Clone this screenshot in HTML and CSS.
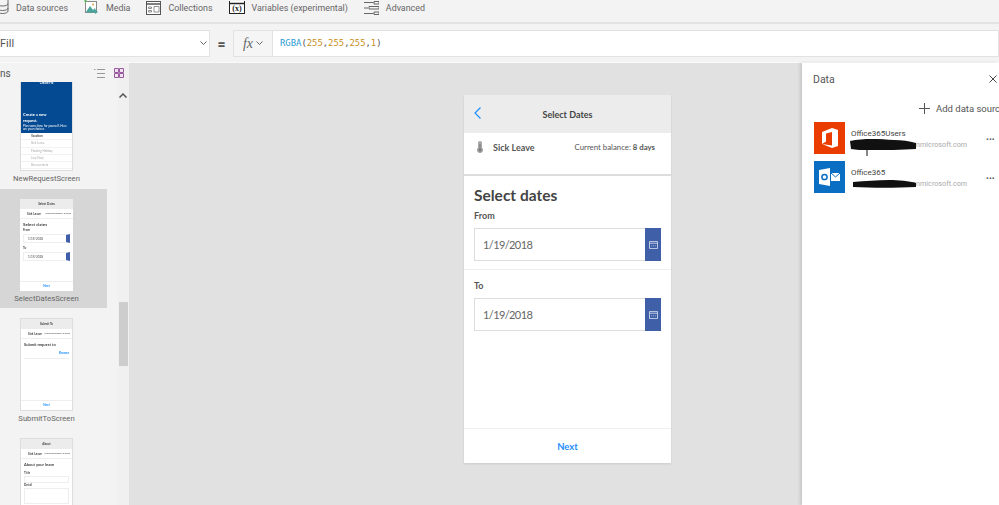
FILE: index.html
```html
<!DOCTYPE html>
<html lang="en">
<head>
    <meta charset="UTF-8">
    <meta name="viewport" content="width=device-width, initial-scale=1.0">
    <title>Select Dates</title>
    <link rel="stylesheet" href="styles.css">
</head>
<body>

    <div class="toolbar">
        <div class="tool tool-data">
            <svg width="12" height="16" viewBox="0 0 12 16"><g fill="none" stroke="#666"><path d="M0 0v11c0 1.500 2.500 2.500 5.500 2.500S11 12.500 11 11V0"/><path d="M0 3.500c0 1.500 2.500 2.500 5.500 2.500S11 5 11 3.500M0 8c0 1.500 2.500 2.500 5.500 2.500S11 9.500 11 8"/></g></svg>
            <span>Data sources</span>
        </div>
        <div class="tool">
            <svg width="15" height="16" viewBox="0 0 15 16"><rect x="1.500" y="1.500" width="11" height="11" fill="#fff" stroke="#888"/><path d="M2 12l4-6 3 4 2-2 1.500 4.500H2z" fill="#4aa59c"/><path d="M0 1h3M1.500 0v3" stroke="#5cb85c"/><circle cx="9" cy="4.500" r="1" fill="#d9a441"/><path d="M11 10l3 2-3 2z" fill="#4aa59c"/></svg>
            <span>Media</span>
        </div>
        <div class="tool">
            <svg width="15" height="14" viewBox="0 0 15 14"><rect x=".5" y=".5" width="14" height="13" fill="#fff" stroke="#555"/><path d="M.5 3h14" stroke="#555" stroke-width="1.500"/><path d="M2.500 6h3v1.500h-3zM2.500 9.500h3V11h-3zM8 5.500h5V11H8z" fill="#fff" stroke="#777" stroke-width=".8"/></svg>
            <span>Collections</span>
        </div>
        <div class="tool">
            <svg width="16" height="14" viewBox="0 0 16 14"><rect x=".5" y="-1" width="15" height="13.500" fill="#fff" stroke="#222"/><path d="M.5 2.500h15" stroke="#222" stroke-width="1.500"/><text x="8" y="10" font-size="8" font-weight="bold" text-anchor="middle" font-family="Liberation Serif" fill="#222">(x)</text></svg>
            <span>Variables (experimental)</span>
        </div>
        <div class="tool">
            <svg width="15" height="14" viewBox="0 0 15 14"><path d="M0 1.500h9.500M0 7h4M0 12.500h9.500M10 .5h5v2.500h-5zM5 5.500h10V8H5zM10 11h5v2.500h-5z" fill="none" stroke="#666"/></svg>
            <span>Advanced</span>
        </div>
    </div>

    <div class="formula-bar">
        <div class="property">
            <span>Fill</span>
            <svg width="7" height="5" viewBox="0 0 7 5"><path d="M.5.500l3 3 3-3" fill="none" stroke="#666"/></svg>
        </div>
        <div class="equals">=</div>
        <div class="fx">
            <i>fx</i>
            <svg width="7" height="5" viewBox="0 0 7 5"><path d="M.5.500l3 3 3-3" fill="none" stroke="#666"/></svg>
        </div>
        <div class="formula">
            <span class="fn">RGBA</span><span class="paren">(</span><span class="num">255</span><span class="paren">,</span><span class="num">255</span><span class="paren">,</span><span class="num">255</span><span class="paren">,</span><span class="num">1</span><span class="paren">)</span>
        </div>
    </div>

    <div class="workspace">

        <div class="sidebar">
            <div class="sidebar-list">
                <div class="sidebar-head">
                    <span class="sidebar-title">ns</span>
                    <svg class="view-list" width="11" height="9" viewBox="0 0 11 9"><path d="M3 .500h8M3 4.500h8M3 8.500h8M0 .500h1.500" stroke="#999" fill="none"/></svg>
                    <svg class="view-grid" width="10" height="10" viewBox="0 0 10 10"><path d="M.5.500h4v4h-4zM5.500.500h4v4h-4zM.5 5.500h4v4h-4zM5.500 5.500h4v4h-4z" fill="#efe3f0" stroke="#9a5aa0"/></svg>
                </div>

                <div class="screen-item screen-first">
                    <div class="thumb thumb-short">
                        <div class="mini-hero">
                            <div class="mini-hero-title">Create Fix</div>
                            <div class="mini-hero-big">Create a new<br>request.</div>
                            <div class="mini-hero-sub">Plan some time for yourself. Here are your choices</div>
                        </div>
                        <div class="mini-line"><b>Vacation</b></div>
                        <div class="mini-line">Sick Leave</div>
                        <div class="mini-line">Floating Holiday</div>
                        <div class="mini-line">Jury Duty</div>
                        <div class="mini-line">Bereavement</div>
                    </div>
                    <div class="screen-name">NewRequestScreen</div>
                </div>

                <div class="screen-item screen-selected">
                    <div class="thumb">
                        <div class="mini-head">Select Dates</div>
                        <div class="mini-info"><b>Sick Leave</b><span>Current balance: 8 days</span></div>
                        <div class="mini-body">
                            <div class="mini-h1">Select dates</div>
                            <div class="mini-label">From</div>
                            <div class="mini-input">1/19/2018</div>
                            <div class="mini-label mini-to">To</div>
                            <div class="mini-input">1/19/2018</div>
                        </div>
                        <div class="mini-next">Next</div>
                    </div>
                    <div class="screen-name">SelectDatesScreen</div>
                </div>

                <div class="screen-item">
                    <div class="thumb thumb-border">
                        <div class="mini-head">Submit To</div>
                        <div class="mini-info"><b>Sick Leave</b><span>Current balance: 8 days</span></div>
                        <div class="mini-body">
                            <div class="mini-h2">Submit request to</div>
                            <div class="mini-link">Browse</div>
                        </div>
                        <div class="mini-next">Next</div>
                    </div>
                    <div class="screen-name">SubmitToScreen</div>
                </div>

                <div class="screen-item">
                    <div class="thumb thumb-border">
                        <div class="mini-head">About</div>
                        <div class="mini-info"><b>Sick Leave</b><span>Current balance: 8 days</span></div>
                        <div class="mini-body">
                            <div class="mini-h2">About your leave</div>
                            <div class="mini-label">Title</div>
                            <div class="mini-field"></div>
                            <div class="mini-label">Detail</div>
                            <div class="mini-field mini-field-tall"></div>
                        </div>
                    </div>
                </div>
            </div>

            <div class="scroller">
                <svg class="scroll-up" width="8" height="5" viewBox="0 0 8 5"><path d="M.5 4.500L4 1l3.500 3.500" fill="none" stroke="#555" stroke-width="1.500"/></svg>
                <div class="scroll-thumb"></div>
            </div>
        </div>

        <div class="canvas">
            <div class="phone">
                <div class="phone-head">
                    <svg class="back" width="7" height="12" viewBox="0 0 7 12"><path d="M6.500.500L1 6l5.500 5.500" fill="none" stroke="#1f8fff" stroke-width="1.200"/></svg>
                    <span>Select Dates</span>
                </div>
                <div class="leave-row">
                    <svg width="6" height="12" viewBox="0 0 6 12"><path d="M1 1.500a2 1.500 0 0 1 4 0v5.300a3 3 0 1 1-4 0z" fill="#a8a8a8"/><path d="M2.500 3h1v6h-1z" fill="#777"/><circle cx="3" cy="9" r="1.500" fill="#777"/></svg>
                    <b>Sick Leave</b>
                    <span class="balance">Current balance: <b>8 days</b></span>
                </div>
                <div class="section section-from">
                    <div class="page-title">Select dates</div>
                    <div class="field-label">From</div>
                    <div class="date-input">
                        <span>1/19/2018</span>
                        <div class="date-btn">
                            <svg width="9" height="8" viewBox="0 0 10 9"><path d="M.5.500h9v8h-9zM.5 2.500h9" fill="none" stroke="#cfd6ea"/><path d="M2.500 5h1v1h-1zM4.500 5h1v1h-1zM6.500 5h1v1h-1z" fill="#cfd6ea"/></svg>
                        </div>
                    </div>
                </div>
                <div class="section section-to">
                    <div class="field-label">To</div>
                    <div class="date-input">
                        <span>1/19/2018</span>
                        <div class="date-btn">
                            <svg width="9" height="8" viewBox="0 0 10 9"><path d="M.5.500h9v8h-9zM.5 2.500h9" fill="none" stroke="#cfd6ea"/><path d="M2.500 5h1v1h-1zM4.500 5h1v1h-1zM6.500 5h1v1h-1z" fill="#cfd6ea"/></svg>
                        </div>
                    </div>
                </div>
                <div class="phone-foot">Next</div>
            </div>
        </div>

        <div class="data-panel">
            <div class="panel-head">
                <span>Data</span>
                <svg width="8" height="8" viewBox="0 0 8 8"><path d="M.5.500l7 7M7.500.500l-7 7" stroke="#444" fill="none"/></svg>
            </div>
            <div class="add-source">
                <svg width="11" height="11" viewBox="0 0 11 11"><path d="M5.500 0v11M0 5.500h11" stroke="#555" fill="none"/></svg>
                <span>Add data source</span>
            </div>
            <div class="source">
                <div class="source-icon icon-office">
                    <svg width="16" height="20" viewBox="0 0 16 20"><path d="M0 4L10 0l6 2v16l-6 2L0 16l10 1.500V4L4 5.500v8L0 16z" fill="#fff"/></svg>
                </div>
                <div class="source-text">
                    <div class="source-name">Office365Users</div>
                    <div class="source-sub">onmicrosoft.com</div>
                </div>
                <div class="more">...</div>
                <svg class="scribble scribble-one" width="66" height="17" viewBox="0 0 66 17"><path d="M0 2c14-3 30-2 44-1 8 0 15 1 22 3v6c-14 1-30 1-48 1-6 0-12 0-17-1z" fill="#111"/><path d="M17 10v7" stroke="#111" fill="none"/></svg>
            </div>
            <div class="source">
                <div class="source-icon icon-outlook">
                    <svg width="22" height="18" viewBox="0 0 22 18"><path d="M0 2l11-2v18L0 16z" fill="#fff"/><circle cx="5.500" cy="9" r="2.600" fill="none" stroke="#0a6fc2" stroke-width="1.500"/><path d="M12 5h9v8h-9z" fill="#fff"/><path d="M12 5l4.500 4L21 5" fill="none" stroke="#0a6fc2"/></svg>
                </div>
                <div class="source-text">
                    <div class="source-name">Office365</div>
                    <div class="source-sub">onmicrosoft.com</div>
                </div>
                <div class="more">...</div>
                <svg class="scribble scribble-two" width="63" height="8" viewBox="0 0 63 8"><path d="M0 2c12-1 24-2 36-2 10 0 20 1 27 3v4c-20 1-44 1-63 0z" fill="#111"/></svg>
            </div>
        </div>

    </div>

</body>
</html>
```

FILE: styles.css
```css
* {
    box-sizing: border-box;
}
html, body {
    height: 100%;
}
body {
    margin: 0;
    width: 999px;
    height: 505px;
    overflow: hidden;
    display: flex;
    flex-direction: column;
    font-family: Roboto, Arial, sans-serif;
    background-color: #f3f3f3;
    color: #555;
}

/* top ribbon */
.toolbar {
    height: 24px;
    flex: none;
    display: flex;
    gap: 16px;
    border-bottom: 2px solid #e4e4e4;
    font-size: 8.900px;
    color: #666;
}
.tool {
    display: flex;
    align-items: center;
    height: 16px;
    gap: 7px;
    white-space: nowrap;
}
.tool-data {
    margin-left: -3px;
    gap: 7px;
}

/* formula bar */
.formula-bar {
    height: 38px;
    flex: none;
    display: flex;
    align-items: center;
    padding-top: 1px;
}
.property {
    width: 210px;
    height: 27px;
    background-color: #fff;
    border: 1px solid #e2e2e2;
    border-left: none;
    display: flex;
    align-items: center;
    justify-content: space-between;
    padding-right: 2px;
    font-size: 11px;
}
.equals {
    width: 23px;
    text-align: center;
    font-size: 14px;
    font-weight: bold;
    color: #555;
}
.fx {
    width: 40px;
    height: 27px;
    border: 1px solid #e2e2e2;
    background-color: #f5f5f5;
    display: flex;
    align-items: center;
    justify-content: center;
    gap: 3px;
    font-family: "Liberation Serif", serif;
    font-size: 14px;
    color: #666;
}
.formula {
    flex: 1;
    height: 27px;
    background-color: #fff;
    border: 1px solid #e2e2e2;
    border-left: none;
    padding-left: 7px;
    line-height: 25px;
    font-family: "DejaVu Sans Mono", monospace;
    font-size: 8.900px;
}
.fn {
    color: #2b9bd3;
}
.paren {
    color: #555;
}
.num {
    color: #c98f22;
}

.workspace {
    flex: 1;
    display: flex;
    min-height: 0;
    border-top: 1px solid #fafafa;
}

/* screens list */
.sidebar {
    width: 130px;
    flex: none;
    display: flex;
    border-right: 1px solid #e0e0e0;
    overflow: hidden;
}
.sidebar-list {
    width: 118px;
    flex: none;
}
.sidebar-head {
    width: 125px;
    height: 18px;
    display: flex;
    align-items: center;
    padding: 2px 1px 0 0;
    font-size: 10px;
    margin-bottom: 1px;
    position: relative;
    z-index: 1;
}
.sidebar-title {
    flex: 1;
}
.view-list {
    margin-right: 9px;
}
.screen-item {
    width: 107px;
    height: 120px;
    padding: 10px 14px 0 0;
    display: flex;
    flex-direction: column;
    align-items: center;
}
.screen-first {
    height: 107px;
    padding-top: 0;
}
.screen-selected {
    height: 119px;
    background-color: #d6d6d6;
}
.screen-name {
    margin-top: 2px;
    font-size: 7.700px;
    line-height: 12px;
    color: #666;
    white-space: nowrap;
}

/* mini previews, a quarter of the real screen */
.thumb {
    width: 53px;
    height: 92px;
    flex: none;
    background-color: #fff;
    display: flex;
    flex-direction: column;
    font-family: Lato, sans-serif;
    font-size: 3px;
    color: #444;
    overflow: hidden;
    filter: blur(0.3px);
}
.thumb-short {
    height: 89px;
    border: 1px solid #ddd;
    border-top: none;
}
.thumb-border {
    height: 93px;
    border: 1px solid #ddd;
}
.mini-hero {
    height: 51px;
    flex: none;
    background-color: #044a92;
    color: #fff;
}
.mini-hero-title {
    text-align: center;
    font-weight: bold;
    line-height: 3px;
}
.mini-hero-big {
    margin: 27px 0 0 2px;
    font-size: 4px;
    line-height: 5.500px;
    font-weight: bold;
}
.mini-hero-sub {
    margin: 2px 2px;
    font-size: 3px;
    line-height: 2.500px;
}
.mini-line {
    height: 7.300px;
    padding-left: 10px;
    line-height: 7px;
    color: #aaa;
    border-bottom: 1px solid #f2f2f2;
}
.mini-line b {
    color: #444;
}
.mini-head {
    height: 10px;
    flex: none;
    background-color: #ececec;
    text-align: center;
    line-height: 10px;
    font-weight: bold;
}
.mini-info {
    height: 10px;
    flex: none;
    display: flex;
    justify-content: space-between;
    align-items: center;
    padding: 0 2px 0 7px;
    border-bottom: 1px solid #eee;
}
.mini-info span {
    font-size: 2.500px;
}
.mini-body {
    flex: 1;
    padding: 3px;
}
.mini-h1 {
    font-size: 4.500px;
    font-weight: bold;
    line-height: 6px;
}
.mini-h2 {
    font-size: 4px;
    line-height: 6px;
    font-weight: bold;
    padding-bottom: 3px;
}
.mini-link {
    color: #1f8fff;
    text-align: right;
    font-weight: bold;
    height: 8px;
    border-bottom: 1px solid #eee;
}
.mini-label {
    font-weight: bold;
    line-height: 5px;
}
.mini-to {
    margin-top: 3px;
}
.mini-input {
    height: 9px;
    margin-top: 1px;
    padding-left: 4px;
    line-height: 8px;
    border: 1px solid #eee;
    border-right: 4px solid #3f5fa8;
}
.mini-field {
    height: 7px;
    border: 1px solid #eee;
}
.mini-field-tall {
    height: 16px;
}
.mini-next {
    height: 10px;
    flex: none;
    border-top: 1px solid #eee;
    color: #1f8fff;
    font-weight: bold;
    text-align: center;
    line-height: 9px;
}

.scroller {
    flex: 1;
    background-color: #f0f0f0;
    position: relative;
}
.scroll-up {
    position: absolute;
    left: 1px;
    top: 30px;
}
.scroll-thumb {
    position: absolute;
    left: 1px;
    top: 239px;
    width: 9px;
    height: 64px;
    background-color: #cdcdcd;
}

/* canvas */
.canvas {
    width: 672px;
    flex: none;
    background-color: #e1e1e1;
    padding: 32px 0 0 334px;
}
.phone {
    width: 207px;
    height: 368px;
    background-color: #fff;
    display: flex;
    flex-direction: column;
    font-family: Lato, sans-serif;
    color: #444;
    box-shadow: 0 1px 2px rgba(0, 0, 0, 0.1);
}
.phone-head {
    height: 38px;
    flex: none;
    background-color: #ececec;
    display: flex;
    align-items: center;
    justify-content: center;
    font-size: 9px;
    font-weight: bold;
    position: relative;
}
.back {
    position: absolute;
    left: 10px;
    top: 12px;
}
.leave-row {
    height: 43px;
    flex: none;
    display: flex;
    align-items: center;
    padding: 0 16px 13px 13px;
    font-size: 9px;
    gap: 10px;
    border-bottom: 2px solid #ddd;
    color: #555;
}
.balance {
    margin-left: auto;
    font-size: 7.800px;
}
.section {
    flex: none;
    padding: 0 10px;
}
.section-from {
    height: 94px;
    padding-top: 8px;
    border-bottom: 1px solid #eee;
}
.section-to {
    padding-top: 9px;
}
.page-title {
    font-size: 15.500px;
    line-height: 22px;
    font-weight: bold;
    color: #444;
}
.field-label {
    font-size: 9px;
    font-weight: bold;
    line-height: 14px;
    margin-top: 3px;
    color: #555;
}
.date-input {
    height: 33px;
    margin-top: 5px;
    border: 1px solid #ddd;
    display: flex;
    align-items: center;
    justify-content: space-between;
    padding-left: 8px;
    font-size: 11px;
    letter-spacing: -0.6px;
    color: #666;
}
.section-to .field-label {
    margin-top: 0;
}
.date-btn {
    width: 16px;
    height: 33px;
    margin-right: -1px;
    background-color: #3f5fa8;
    display: flex;
    align-items: center;
    justify-content: center;
}
.phone-foot {
    margin-top: auto;
    height: 35px;
    flex: none;
    border-top: 1px solid #eee;
    text-align: center;
    line-height: 36px;
    font-size: 9.500px;
    font-weight: bold;
    color: #1f8fff;
}

/* data panel */
.data-panel {
    flex: 1;
    background-color: #fff;
    box-shadow: -2px 0 3px rgba(0, 0, 0, 0.12);
    padding-left: 12px;
    font-size: 9.500px;
    white-space: nowrap;
    overflow: hidden;
}
.panel-head {
    height: 32px;
    display: flex;
    align-items: center;
    justify-content: space-between;
    font-size: 10.500px;
    color: #555;
    padding: 0 2px 0 0;
    margin-left: -1px;
}
.add-source {
    height: 27px;
    margin-left: 105px;
    display: flex;
    align-items: center;
    gap: 6px;
    width: 90px;
}
.source {
    height: 39px;
    display: flex;
    position: relative;
    gap: 6px;
}
.source-icon {
    width: 31px;
    height: 32px;
    flex: none;
    display: flex;
    align-items: center;
    justify-content: center;
}
.icon-office {
    background-color: #eb3c00;
}
.icon-outlook {
    background-color: #0a6fc2;
}
.source-name {
    font-size: 8px;
    line-height: 11px;
    margin-top: 6px;
    color: #444;
}
.source-sub {
    font-size: 7.200px;
    line-height: 11px;
    color: #aaa;
    padding-left: 61px;
}
.more {
    position: absolute;
    left: 172px;
    top: 9px;
    font-size: 10px;
    font-weight: bold;
    line-height: 12px;
}
.scribble {
    position: absolute;
}
.scribble-one {
    left: 36px;
    top: 17px;
}
.scribble-two {
    left: 39px;
    top: 19px;
}
```
